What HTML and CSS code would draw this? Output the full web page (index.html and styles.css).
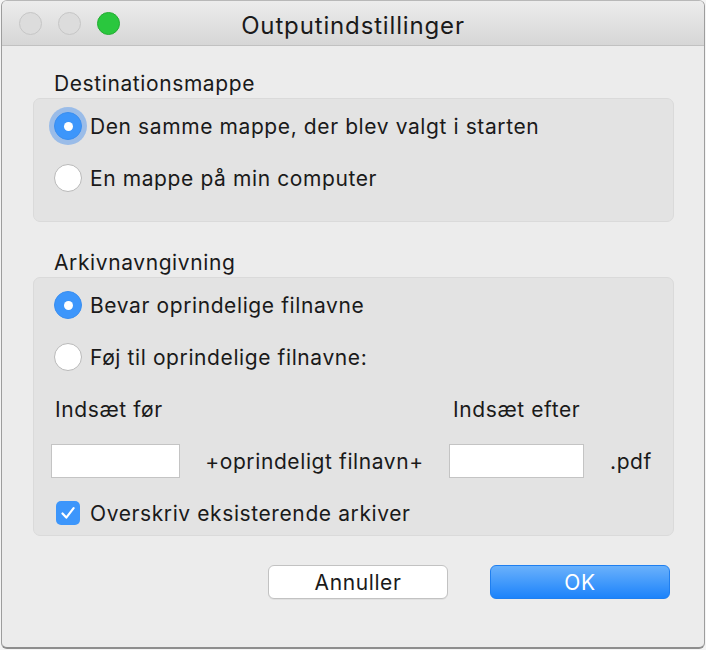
FILE: index.html
```html
<!DOCTYPE html>
<html lang="da">
<head>
<meta charset="utf-8">
<title>Outputindstillinger</title>
<link rel="stylesheet" href="styles.css">
</head>
<body>
<div class="window">
  <div class="titlebar">
    <div class="lights">
      <span class="light gray"></span>
      <span class="light gray"></span>
      <span class="light green"></span>
    </div>
    <div class="title">Outputindstillinger</div>
  </div>
  <div class="content">
    <div class="section-label first">Destinationsmappe</div>
    <div class="group group-dest">
      <div class="row">
        <span class="radio checked focus"></span>
        <span class="text">Den samme mappe, der blev valgt i starten</span>
      </div>
      <div class="row">
        <span class="radio"></span>
        <span class="text">En mappe på min computer</span>
      </div>
    </div>

    <div class="section-label second">Arkivnavngivning</div>
    <div class="group group-name">
      <div class="row">
        <span class="radio checked"></span>
        <span class="text">Bevar oprindelige filnavne</span>
      </div>
      <div class="row">
        <span class="radio"></span>
        <span class="text">Føj til oprindelige filnavne:</span>
      </div>
      <div class="grid-row labels">
        <span class="col1 lbl">Indsæt før</span>
        <span></span>
        <span class="col3 lbl">Indsæt efter</span>
        <span></span>
      </div>
      <div class="grid-row inputs">
        <span class="field field1"></span>
        <span class="mid">+oprindeligt filnavn+</span>
        <span class="field field2"></span>
        <span class="ext">.pdf</span>
      </div>
      <div class="row check-row">
        <span class="checkbox">
          <svg width="24" height="24" viewBox="0 0 24 24"><path d="M6.5 12.5 L10.3 16.6 L17.6 7.2" fill="none" stroke="#fff" stroke-width="2.2" stroke-linecap="round" stroke-linejoin="round"/></svg>
        </span>
        <span class="text">Overskriv eksisterende arkiver</span>
      </div>
    </div>

    <div class="buttons">
      <button class="btn cancel">Annuller</button>
      <button class="btn ok">OK</button>
    </div>
  </div>
</div>
</body>
</html>
```
FILE: styles.css
```css
html, body {
  margin: 0;
  padding: 0;
}
body {
  width: 706px;
  height: 650px;
  background: #f4f4f4;
  font-family: Inter, "Liberation Sans", Arial, sans-serif;
  color: #1a1a1a;
  overflow: hidden;
}
.window {
  margin-left: 1px;
  width: 702px;
  height: 646px;
  border: 1px solid #9d9d9d;
  border-top-color: #b8b8b8;
  border-bottom: 2px solid #8e8e8e;
  border-radius: 6px;
  background: #ececec;
  overflow: hidden;
  box-sizing: content-box;
}
.titlebar {
  height: 44px;
  border-bottom: 1px solid #c1c1c1;
  background: linear-gradient(#ececec, #d6d6d6);
  display: flex;
  align-items: center;
  position: relative;
}
.lights {
  display: flex;
  gap: 16px;
  padding-left: 17px;
  position: relative;
  z-index: 1;
}
.light {
  width: 23px;
  height: 23px;
  border-radius: 50%;
  box-sizing: border-box;
}
.light.gray {
  background: #dcdcdc;
  border: 1px solid #c6c6c6;
}
.light.green {
  background: #2ac73e;
  border: 1px solid #24ad33;
}
.title {
  position: absolute;
  left: 0;
  right: 0;
  text-align: center;
  font-size: 24px;
  color: #1a1a1a;
  top: 10px;
  letter-spacing: 0.85px;
}
.content {
  padding: 0 30px 0 31px;
}
.section-label {
  font-size: 21px;
  padding-left: 21px;
  height: 28px;
  line-height: 28px;
  letter-spacing: 0.6px;
}
.section-label.first {
  margin-top: 24px;
}
.section-label.second {
  margin-top: 27px;
}
.group {
  background: #e3e3e3;
  border: 1px solid #dadada;
  border-radius: 7px;
  box-sizing: border-box;
  padding-top: 1px;
}
.group-dest {
  height: 124px;
}
.group-name {
  height: 259px;
}
.row {
  height: 52px;
  display: flex;
  align-items: center;
  padding-left: 20px;
}
.text {
  font-size: 21px;
  margin-left: 8px;
  letter-spacing: 0.6px;
}
.radio {
  width: 28px;
  height: 28px;
  border-radius: 50%;
  box-sizing: border-box;
  background: #fff;
  border: 1px solid #b9b9b9;
  position: relative;
  flex: none;
}
.radio.checked {
  background: #3d96fb;
  border-color: #3a8ef0;
}
.radio.checked::after {
  content: "";
  position: absolute;
  left: 50%;
  top: 50%;
  width: 9px;
  height: 9px;
  margin: -4.5px 0 0 -4.5px;
  border-radius: 50%;
  background: #fff;
}
.radio.focus {
  box-shadow: 0 0 0 5px rgba(94, 156, 236, 0.55);
}
.grid-row {
  display: grid;
  grid-template-columns: 129px 269px 135px auto;
  padding-left: 17px;
  align-items: center;
  font-size: 21px;
  letter-spacing: 0.6px;
}
.labels {
  height: 52px;
}
.inputs {
  height: 52px;
}
.lbl {
  padding-left: 4px;
  white-space: nowrap;
}
.field {
  height: 34px;
  background: #fff;
  border: 1px solid #c4c4c4;
  box-sizing: border-box;
}
.mid {
  text-align: center;
  white-space: nowrap;
}
.ext {
  padding-left: 26px;
}
.check-row {
  height: 52px;
  padding-left: 22px;
}
.checkbox {
  width: 24px;
  height: 24px;
  border-radius: 5px;
  background: #3d96fb;
  flex: none;
  display: flex;
}
.check-row .text {
  margin-left: 10px;
}
.buttons {
  display: flex;
  justify-content: flex-end;
  gap: 42px;
  margin-top: 29px;
  padding-right: 4px;
}
.btn {
  width: 180px;
  height: 34px;
  border-radius: 6px;
  font-family: inherit;
  font-size: 21px;
  letter-spacing: 0.6px;
  padding: 0;
  box-sizing: border-box;
}
.cancel {
  background: #fff;
  border: 1px solid #c2c2c2;
  color: #1a1a1a;
  box-shadow: 0 1px 0 rgba(0,0,0,0.05);
}
.ok {
  background: linear-gradient(#6ab1fb, #1c83fb);
  border: 1px solid #1f7ff0;
  color: #fff;
}
```
